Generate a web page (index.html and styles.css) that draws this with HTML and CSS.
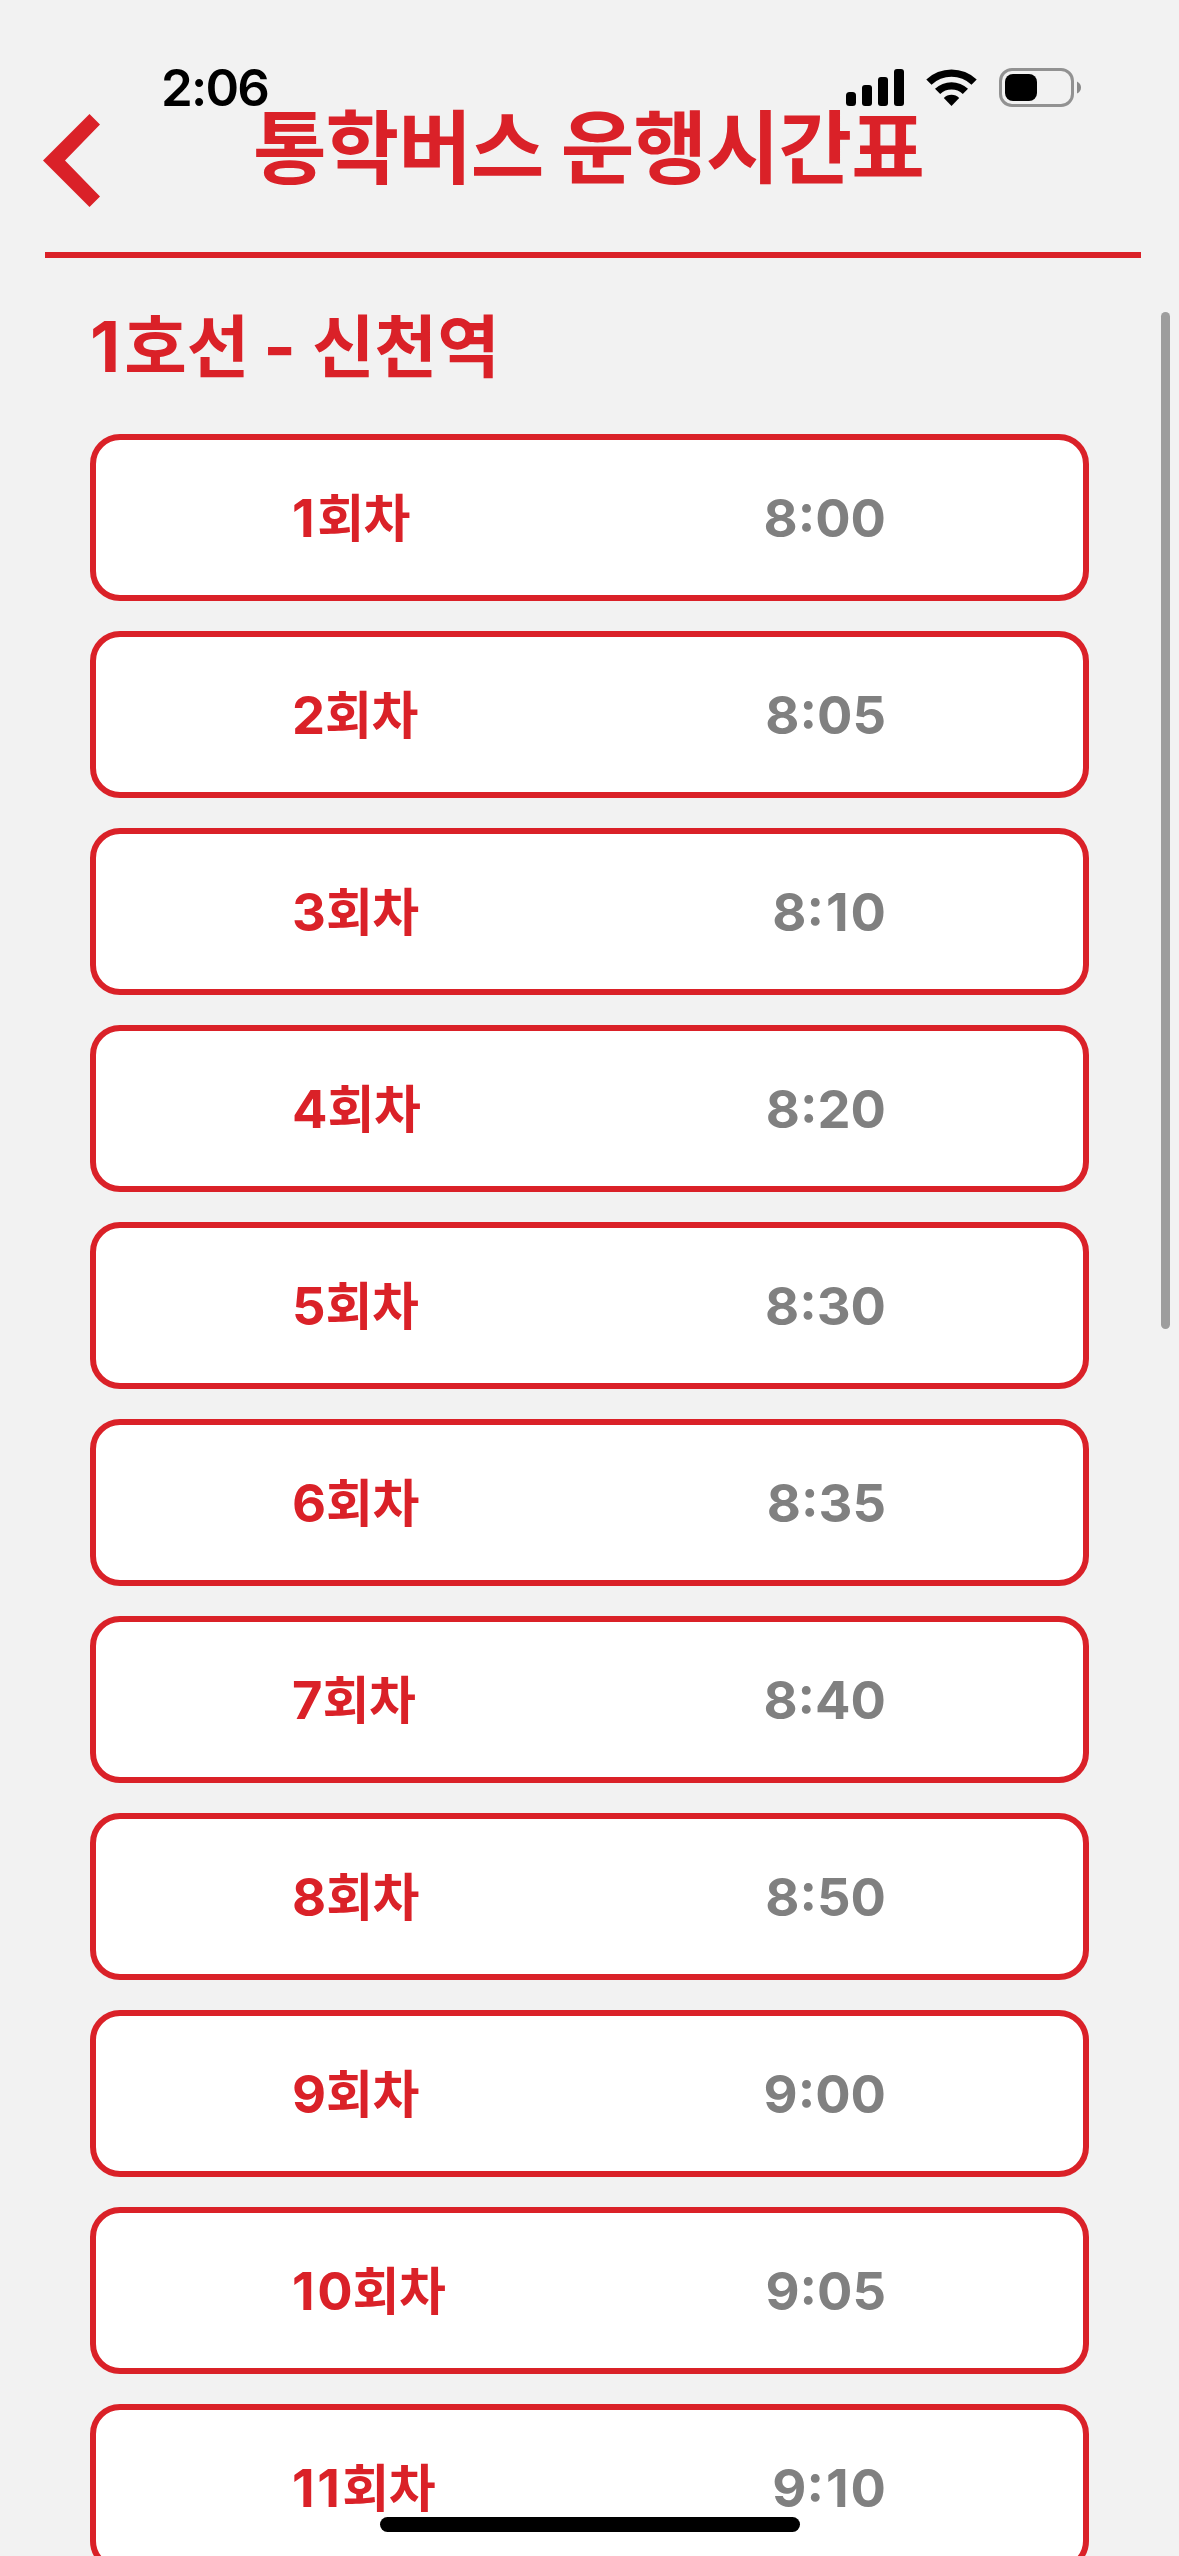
FILE: index.html
```html
<!DOCTYPE html>
<html lang="ko">
<head>
<meta charset="utf-8">
<title>통학버스 운행시간표</title>
<link rel="stylesheet" href="styles.css">
</head>
<body>
<div class="screen">
  <header class="header">
    <svg class="back" width="57" height="93" viewBox="0 0 57 93"><path d="M0 46.5 46.5 0 57 10.5 22 46.5 57 82.5 46.5 93Z"/></svg>
    <h1 class="title">통학버스 운행시간표</h1>
  </header>
  <main class="content">
    <h2 class="route"><span class="route-num">1</span>호선<span class="dash">-</span>신천역</h2>
    <ul class="list">
      <li class="card"><span class="round"><b class="num"><span class="one">1</span></b>회차</span><time class="time">8:00</time></li>
      <li class="card"><span class="round"><b class="num">2</b>회차</span><time class="time">8:05</time></li>
      <li class="card"><span class="round"><b class="num">3</b>회차</span><time class="time">8:<span class="one">1</span>0</time></li>
      <li class="card"><span class="round"><b class="num">4</b>회차</span><time class="time">8:20</time></li>
      <li class="card"><span class="round"><b class="num">5</b>회차</span><time class="time">8:30</time></li>
      <li class="card"><span class="round"><b class="num">6</b>회차</span><time class="time">8:35</time></li>
      <li class="card"><span class="round"><b class="num">7</b>회차</span><time class="time">8:40</time></li>
      <li class="card"><span class="round"><b class="num">8</b>회차</span><time class="time">8:50</time></li>
      <li class="card"><span class="round"><b class="num">9</b>회차</span><time class="time">9:00</time></li>
      <li class="card"><span class="round"><b class="num"><span class="one">1</span>0</b>회차</span><time class="time">9:05</time></li>
      <li class="card"><span class="round"><b class="num"><span class="one">1</span><span class="one">1</span></b>회차</span><time class="time">9:<span class="one">1</span>0</time></li>
    </ul>
  </main>
  <div class="status">
    <span class="clock">2:06</span>
    <svg class="status-icons" width="236" height="40" viewBox="846 68 236 40">
      <rect x="846" y="92" width="10" height="14" rx="3.500"/>
      <rect x="862" y="85" width="10" height="21" rx="3"/>
      <rect x="878" y="77" width="10" height="29" rx="3"/>
      <rect x="894" y="69" width="10" height="37" rx="3"/>
      <path d="M926.3 79.6a36.5 36.5 0 0 1 50.4 0l-5.2 5.1a29 29 0 0 0-40 0Z"/>
      <path d="M935 88.8a23.8 23.8 0 0 1 33 0l-5.2 5.1a16.6 16.6 0 0 0-22.6 0Z"/>
      <path d="M943.8 98a11 11 0 0 1 15.4 0l-7.7 8Z"/>
      <rect x="1000.5" y="69.500" width="72" height="36" rx="11.5" fill="none" stroke="#929292" stroke-width="3"/>
      <rect x="1005" y="74" width="32" height="27" rx="8"/>
      <path d="M1077 81.500q4 2 4 6t-4 6Z" fill="#8a8a8a"/>
    </svg>
  </div>
  <div class="scrollbar"></div>
  <div class="home"></div>
</div>
</body>
</html>
```
FILE: styles.css
```css
* { box-sizing: border-box; margin: 0; padding: 0; }
html, body { height: 2556px; overflow: hidden; background: #f2f2f2; }
.screen {
  position: relative;
  width: 1179px;
  height: 2556px;
  overflow: hidden;
  font-family: Inter, "Noto Sans CJK KR", sans-serif;
  font-weight: 700;
  color: #da2128;
}
.header {
  display: flex;
  height: 258px;
  margin: 0 38px 0 45px;
  padding-top: 92px;
  border-bottom: 6px solid #da2128;
}
.back { flex: none; margin: 22px 0 0 -2px; fill: #da2128; }
.title {
  margin-left: 153px;
  font-family: "Noto Sans CJK KR", sans-serif;
  font-size: 80px;
  line-height: 100px;
  letter-spacing: -1px;
  word-spacing: -4px;
  white-space: nowrap;
}
.content { padding: 47px 90px 0; }
.route {
  display: flex;
  align-items: baseline;
  height: 129px;
  font-family: "Noto Sans CJK KR", sans-serif;
  font-size: 68px;
  line-height: 76px;
}
.route-num, .dash { font-family: Inter, sans-serif; font-size: 70px; }
.route-num { margin-right: 4px; }
.dash { margin: 0 16px 0 14px; }
.list { display: flex; flex-direction: column; gap: 30px; list-style: none; }
.card {
  display: flex;
  flex: none;
  align-items: center;
  justify-content: space-between;
  height: 167px;
  padding: 0 197px 0 196px;
  border: 6px solid #da2128;
  border-radius: 30px;
  background: #fff;
}
.round {
  display: flex;
  align-items: baseline;
  padding-bottom: 3px;
  font-family: "Noto Sans CJK KR", sans-serif;
  font-size: 51px;
  line-height: 60px;
  letter-spacing: -0.5px;
}
.num, .time {
  font-family: Inter, sans-serif;
  font-size: 52.5px;
  font-weight: 700;
  letter-spacing: 0;
}
.one { margin-right: 2.5px; }
.time { line-height: 60px; color: #808080; }
.time .one { margin: 0 2px; }
.status {
  position: absolute;
  top: 68px;
  left: 161px;
  right: 97px;
  display: flex;
  justify-content: space-between;
  color: #000;
}
.clock { font-size: 51px; font-weight: 600; line-height: 39px; letter-spacing: -1.8px; }
.scrollbar {
  position: absolute;
  top: 312px;
  right: 9px;
  width: 9px;
  height: 1017px;
  border-radius: 5px;
  background: #9d9d9d;
}
.home {
  position: absolute;
  left: 380px;
  bottom: 24px;
  width: 420px;
  height: 15px;
  border-radius: 8px;
  background: #000;
}
```
